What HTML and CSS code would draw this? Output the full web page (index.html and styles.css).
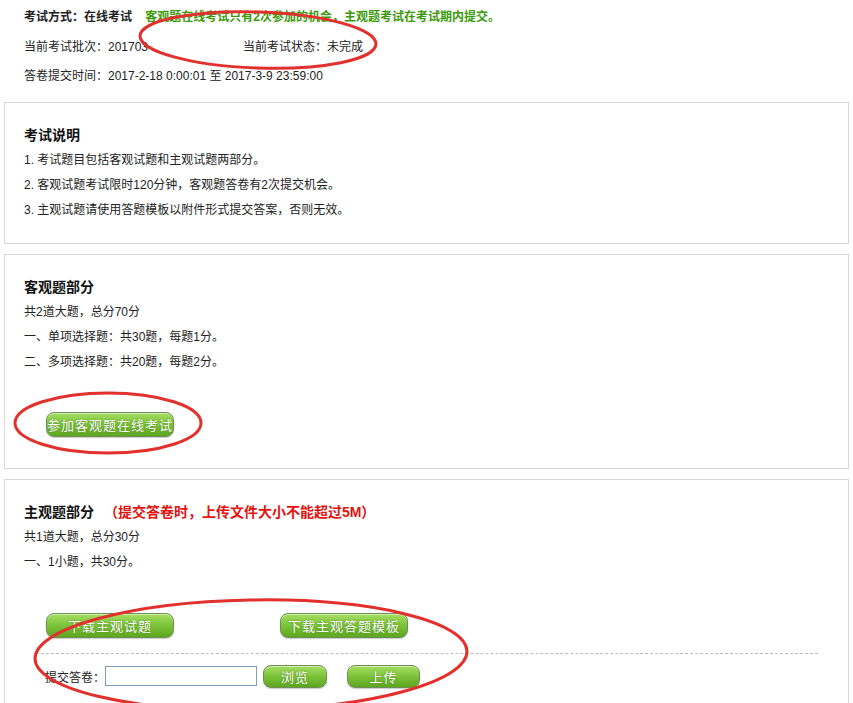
FILE: index.html
```html
<!DOCTYPE html>
<html lang="zh-CN">
<head>
    <meta charset="UTF-8">
    <title>考试信息</title>
    <link rel="stylesheet" href="styles.css">
</head>
<body>
    <div class="page">
        <div class="exam-info">
            <div class="info-row">
                <span class="info-mode">考试方式：在线考试</span>
                <span class="info-note">客观题在线考试只有2次参加的机会，主观题考试在考试期内提交。</span>
            </div>
            <div class="info-row">
                <span class="info-batch">当前考试批次：201703</span><span>当前考试状态：未完成</span>
            </div>
            <div class="info-row">答卷提交时间：2017-2-18 0:00:01 至 2017-3-9 23:59:00</div>
        </div>

        <div class="box">
            <h3>考试说明</h3>
            <p>1. 考试题目包括客观试题和主观试题两部分。</p>
            <p>2. 客观试题考试限时120分钟，客观题答卷有2次提交机会。</p>
            <p>3. 主观试题请使用答题模板以附件形式提交答案，否则无效。</p>
        </div>

        <div class="box box-objective">
            <h3>客观题部分</h3>
            <p>共2道大题，总分70分</p>
            <p>一、单项选择题：共30题，每题1分。</p>
            <p>二、多项选择题：共20题，每题2分。</p>
            <div class="actions">
                <button class="btn btn-wide">参加客观题在线考试</button>
            </div>
        </div>

        <div class="box box-subjective">
            <h3>主观题部分 <span class="warn">（提交答卷时，上传文件大小不能超过5M）</span></h3>
            <p>共1道大题，总分30分</p>
            <p>一、1小题，共30分。</p>
            <div class="downloads">
                <button class="btn btn-wide">下载主观试题</button>
                <button class="btn btn-wide">下载主观答题模板</button>
            </div>
            <div class="upload-row">
                <span>提交答卷：</span>
                <input type="text" class="file-input">
                <button class="btn btn-browse">浏览</button>
                <button class="btn btn-upload">上传</button>
            </div>
        </div>

        <!-- red annotation marks drawn over the screenshot -->
        <svg class="marks" width="853" height="703" viewBox="0 0 853 703">
            <ellipse cx="258" cy="40" rx="118" ry="28" transform="rotate(2 258 40)"/>
            <ellipse cx="108" cy="423" rx="93" ry="30"/>
            <ellipse cx="251" cy="655" rx="216" ry="55" transform="rotate(-1 251 655)"/>
        </svg>
    </div>
</body>
</html>
```

FILE: styles.css
```css
body {
    margin: 0;
    background: #fff;
    color: #222;
    font-family: "Liberation Sans", "Noto Sans CJK SC", sans-serif;
    font-size: 12px;
}

.page {
    position: relative;
    width: 853px;
    height: 703px;
    overflow: hidden;
}

.exam-info {
    padding: 3px 24px 0;
    margin-bottom: 10px;
}

.info-row {
    height: 29.5px;
    line-height: 29.5px;
}

.info-mode {
    font-weight: bold;
}

.info-note {
    margin-left: 10px;
    color: #3a9a0c;
    font-weight: bold;
}

.info-batch {
    display: inline-block;
    width: 219px;
}

.box {
    margin: 0 4px 10px;
    border: 1px solid #d6d6d6;
    padding: 20px 19px;
}

.box h3 {
    margin: 0;
    font-size: 14px;
    line-height: 25px;
    color: #111;
}

.box p {
    margin: 0;
    line-height: 25px;
}

.warn {
    margin-left: 6px;
    color: #e3130f;
}

.box-objective {
    padding-bottom: 31px;
}

.actions {
    padding: 37px 0 0 22px;
}

.btn {
    height: 25px;
    border: 1px solid #6d8f55;
    border-radius: 8px;
    background: linear-gradient(#a6de62, #7cc33a 50%, #5ea61f);
    box-shadow: inset 0 1px 0 rgba(255, 255, 255, 0.5), 0 1px 1px rgba(0, 0, 0, 0.2);
    color: #fff;
    font-family: "Liberation Sans", "Noto Sans CJK SC", sans-serif;
    font-size: 13px;
    letter-spacing: 1px;
    text-shadow: 0 0 2px rgba(40, 80, 10, 0.6);
    padding: 0;
    cursor: pointer;
}

.btn-wide {
    width: 128px;
}

.downloads {
    display: flex;
    gap: 106px;
    padding: 38px 0 0 22px;
}

.upload-row {
    display: flex;
    align-items: center;
    margin: 15px 11px 0 12px;
    padding: 11px 0 0 9px;
    border-top: 1px dashed #bbb;
}

.file-input {
    width: 152px;
    height: 20px;
    box-sizing: border-box;
    border: 1px solid #7f9db9;
    margin: 0;
}

.btn-browse {
    width: 64px;
    height: 23px;
    margin-left: 6px;
}

.btn-upload {
    width: 73px;
    height: 23px;
    margin-left: 20px;
}

.marks {
    position: absolute;
    left: 0;
    top: 0;
    pointer-events: none;
}

.marks ellipse {
    fill: none;
    stroke: #e2312d;
    stroke-width: 3;
}
```
